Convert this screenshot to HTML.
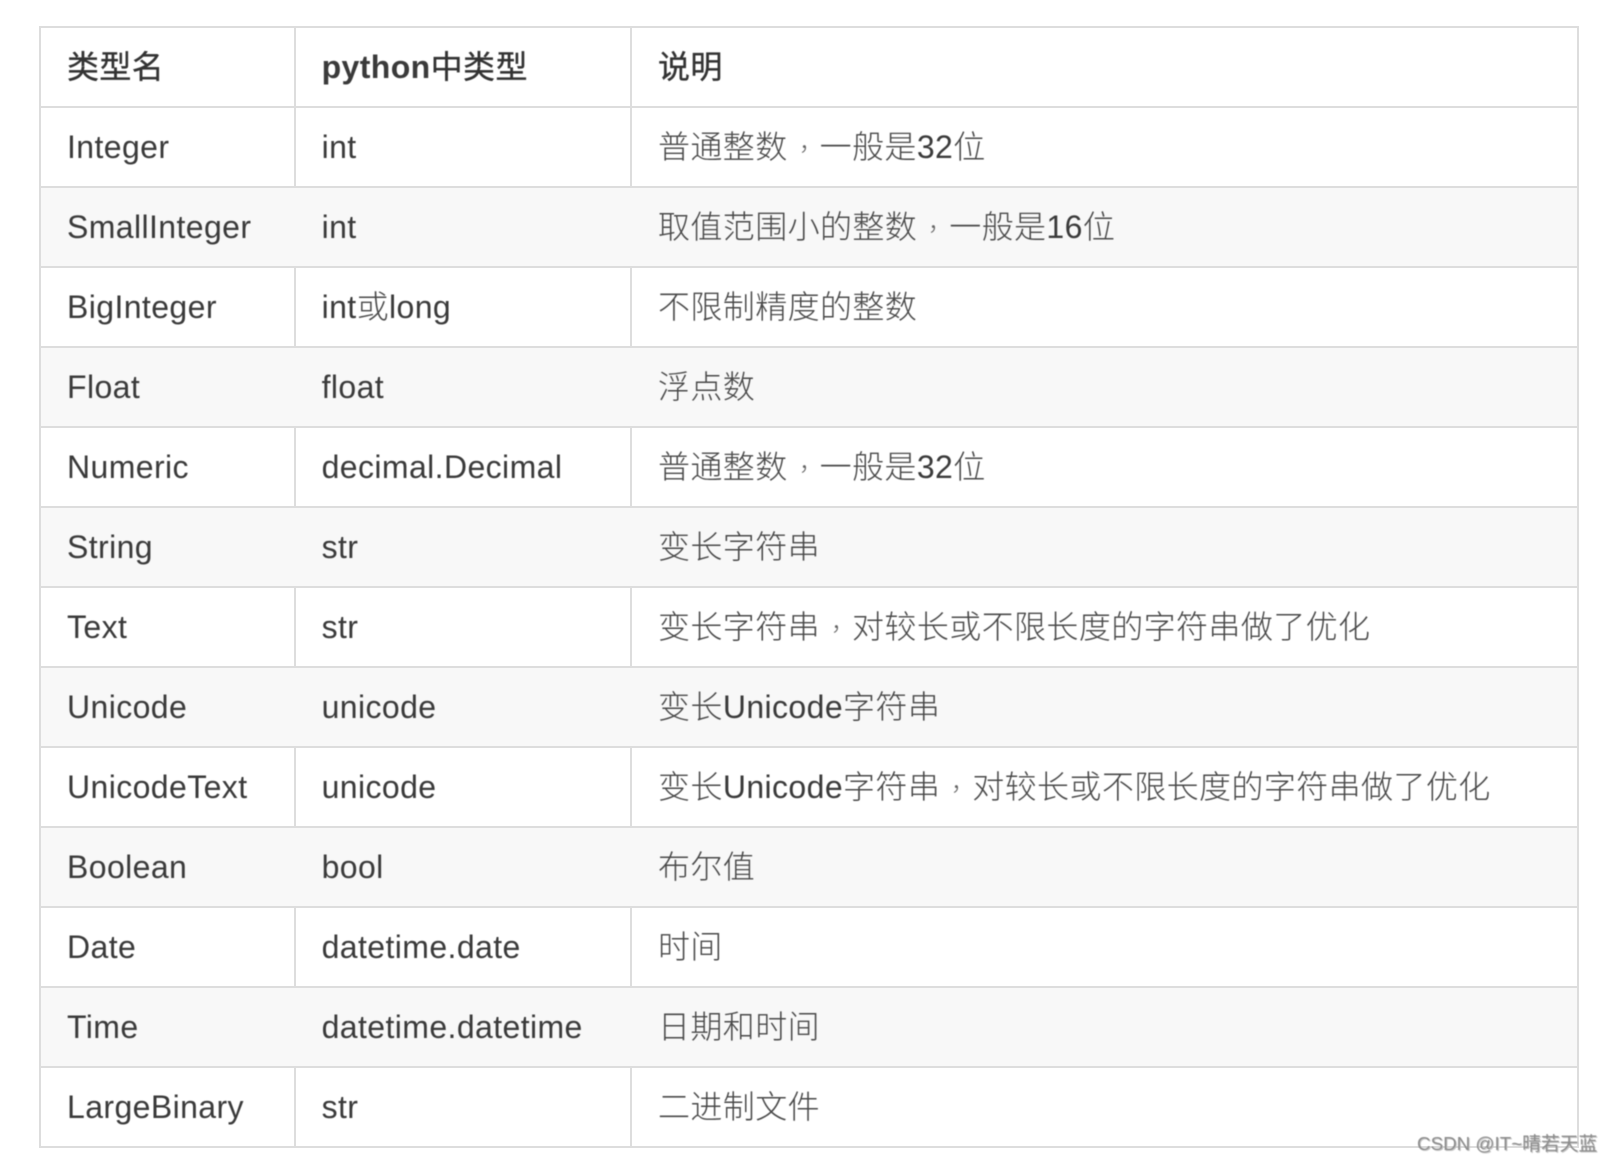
<!DOCTYPE html>
<html lang="zh">
<head>
<meta charset="utf-8">
<style>
html,body{margin:0;padding:0;background:#fff;width:1612px;height:1162px;overflow:hidden}
body{position:relative;font-family:"Liberation Sans","Noto Sans CJK SC",sans-serif;color:#3a3a3a;font-size:32px}
.tb{position:absolute;left:39px;top:26px;width:1540px;height:1122px;box-sizing:border-box;border:2px solid #ddd}
.r{position:absolute;left:41px;width:1536px;height:78px;line-height:78px}
.s{background:#f8f8f8}
.l{position:absolute;left:41px;width:1536px;height:2px;background:#ddd}
.v{position:absolute;top:26px;width:2px;height:1122px;background:#ddd}
.c{position:absolute;top:0;white-space:nowrap;letter-spacing:.4px;filter:blur(.4px)}
.a{left:26px}.b{left:280.6px}.d{left:617px;letter-spacing:.4px}
.h{font-weight:700}
.z{font-weight:300;color:#484848}
.y{font-weight:400;color:#333;-webkit-text-stroke:.35px #333}
.t{display:inline-block;width:32px;font-weight:300;color:#666;transform:translate(7px,-5px) scale(.75);letter-spacing:0}
.w{position:absolute;left:1417px;top:1131px;font-size:18.8px;line-height:26px;color:#8c8c8c;white-space:nowrap;text-shadow:1px 1px 0 #c4c4c4;filter:blur(.4px)}
</style>
</head>
<body>
<div class="tb"></div>
<div class="v" style="left:294px"></div>
<div class="v" style="left:630px"></div>

<div class="r" style="top:28px"><span class="c a y">类型名</span><span class="c b h">python<span class="y" style="font-weight:400">中类型</span></span><span class="c d y">说明</span></div>
<div class="l" style="top:106px"></div>
<div class="r" style="top:108px"><span class="c a">Integer</span><span class="c b">int</span><span class="c d"><span class="z">普通整数</span><span class="t">，</span><span class="z">一般是</span>32<span class="z">位</span></span></div>
<div class="l" style="top:186px"></div>
<div class="r s" style="top:188px"><span class="c a">SmallInteger</span><span class="c b">int</span><span class="c d"><span class="z">取值范围小的整数</span><span class="t">，</span><span class="z">一般是</span>16<span class="z">位</span></span></div>
<div class="l" style="top:266px"></div>
<div class="r" style="top:268px"><span class="c a">BigInteger</span><span class="c b">int<span class="z">或</span>long</span><span class="c d z">不限制精度的整数</span></div>
<div class="l" style="top:346px"></div>
<div class="r s" style="top:348px"><span class="c a">Float</span><span class="c b">float</span><span class="c d z">浮点数</span></div>
<div class="l" style="top:426px"></div>
<div class="r" style="top:428px"><span class="c a">Numeric</span><span class="c b">decimal.Decimal</span><span class="c d"><span class="z">普通整数</span><span class="t">，</span><span class="z">一般是</span>32<span class="z">位</span></span></div>
<div class="l" style="top:506px"></div>
<div class="r s" style="top:508px"><span class="c a">String</span><span class="c b">str</span><span class="c d z">变长字符串</span></div>
<div class="l" style="top:586px"></div>
<div class="r" style="top:588px"><span class="c a">Text</span><span class="c b">str</span><span class="c d"><span class="z">变长字符串</span><span class="t">，</span><span class="z">对较长或不限长度的字符串做了优化</span></span></div>
<div class="l" style="top:666px"></div>
<div class="r s" style="top:668px"><span class="c a">Unicode</span><span class="c b">unicode</span><span class="c d"><span class="z">变长</span>Unicode<span class="z">字符串</span></span></div>
<div class="l" style="top:746px"></div>
<div class="r" style="top:748px"><span class="c a">UnicodeText</span><span class="c b">unicode</span><span class="c d"><span class="z">变长</span>Unicode<span class="z">字符串</span><span class="t">，</span><span class="z">对较长或不限长度的字符串做了优化</span></span></div>
<div class="l" style="top:826px"></div>
<div class="r s" style="top:828px"><span class="c a">Boolean</span><span class="c b">bool</span><span class="c d z">布尔值</span></div>
<div class="l" style="top:906px"></div>
<div class="r" style="top:908px"><span class="c a">Date</span><span class="c b">datetime.date</span><span class="c d z">时间</span></div>
<div class="l" style="top:986px"></div>
<div class="r s" style="top:988px"><span class="c a">Time</span><span class="c b">datetime.datetime</span><span class="c d z">日期和时间</span></div>
<div class="l" style="top:1066px"></div>
<div class="r" style="top:1068px"><span class="c a">LargeBinary</span><span class="c b">str</span><span class="c d z">二进制文件</span></div>

<div class="w">CSDN @IT~晴若天蓝</div>
</body>
</html>
